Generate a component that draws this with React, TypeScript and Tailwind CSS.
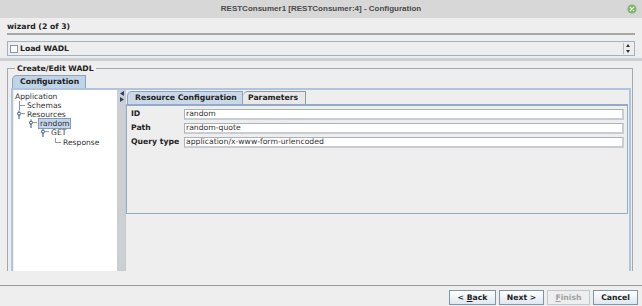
import React from "react";

const dejavu = "font-['DejaVu_Sans',sans-serif]";

const CloseIcon = () => (
  <svg width="10" height="10" viewBox="0 0 10 10" aria-hidden="true">
    <circle cx="5" cy="5" r="4.6" fill="#7dba67" />
    <path d="M3.3 3.3l3.4 3.4M6.7 3.3l-3.4 3.4" stroke="#ffffff" strokeWidth="1.2" strokeLinecap="round" />
  </svg>
);

// Metal look tree handle: small ring with a stem
const Handle = () => (
  <svg width="12" height="9" viewBox="0 0 12 9" aria-hidden="true">
    <line x1="5" y1="0" x2="5" y2="2.3" stroke="#8b98a6" strokeWidth="1" />
    <circle cx="5" cy="3.6" r="1.5" fill="#ffffff" stroke="#2f4f82" strokeWidth="1" />
    <line x1="5" y1="5.1" x2="5" y2="9" stroke="#2f4f82" strokeWidth="1" />
    <line x1="6.5" y1="3.6" x2="11" y2="3.6" stroke="#8b98a6" strokeWidth="1" />
  </svg>
);

const Branch = ({ last }: { last?: boolean }) => (
  <svg width="12" height="9" viewBox="0 0 12 9" aria-hidden="true">
    <line x1="5.5" y1="0" x2="5.5" y2={last ? 4.5 : 9} stroke="#8b98a6" strokeWidth="1" />
    <line x1="5.5" y1="4.5" x2="11" y2="4.5" stroke="#8b98a6" strokeWidth="1" />
  </svg>
);

const Spacer = () => <span className="inline-block w-[12px] h-[9px]" />;

const tree = [
  { label: "Application", pre: [] as React.ReactNode[] },
  { label: "Schemas", pre: [<Branch key="b" />] },
  { label: "Resources", pre: [<Handle key="h" />] },
  { label: "random", pre: [<Spacer key="s" />, <Handle key="h" />], selected: true },
  { label: "GET", pre: [<Spacer key="s1" />, <Spacer key="s2" />, <Handle key="h" />] },
  { label: "Response", pre: [<Spacer key="s1" />, <Spacer key="s2" />, <Spacer key="s3" />, <Branch key="b" last />] },
];

const fields = [
  { label: "ID", value: "random" },
  { label: "Path", value: "random-quote" },
  { label: "Query type", value: "application/x-www-form-urlencoded" },
];

const dots = "bg-[radial-gradient(circle,#a4acb4_0.6px,transparent_0.8px)] bg-[size:2px_2px]";

export default function App() {
  return (
    <div className={`w-[642px] h-[306px] bg-[#eeeeee] flex flex-col overflow-hidden text-[#333333] ${dejavu}`}>
      {/* Window title */}
      <div className="h-[18px] bg-[#d7d7d7] flex items-center shrink-0">
        <div className="w-[20px]" />
        <div className="flex-1 text-center font-['Liberation_Sans',sans-serif] font-bold text-[8px] text-[#4a4a4a]">
          RESTConsumer1 [RESTConsumer:4] - Configuration
        </div>
        <div className="w-[20px] flex justify-center">
          <CloseIcon />
        </div>
      </div>

      {/* Wizard header */}
      <div className="px-[7px]">
        <div className="h-[15px] flex items-end pb-[1px] font-bold text-[7.7px] leading-[10px] text-[#222222]">
          wizard (2 of 3)
        </div>
        <div className="h-[2px] bg-[#a7a7a7]" />

        <div className="mt-[6px] h-[15px] border border-[#9fb2c6] flex items-center">
          <span className="ml-[2px] w-[8px] h-[8px] bg-white border border-[#8797a8]" />
          <span className="ml-[2px] font-bold text-[7.7px] text-[#222222]">Load WADL</span>
          <span className="flex-1" />
          <span className="w-[9px] h-[11px] mr-[2px] border-l border-[#b5bcc4] flex flex-col items-center justify-between py-[1px]">
            <svg width="4" height="3" viewBox="0 0 4 3"><path d="M2 0L4 3H0z" fill="#333" /></svg>
            <svg width="4" height="3" viewBox="0 0 4 3"><path d="M2 3L4 0H0z" fill="#333" /></svg>
          </span>
        </div>
      </div>

      <div className={`mt-[2px] h-[3px] ${dots}`} />

      {/* Main titled area, clipped at the bottom */}
      <div className="h-[210px] overflow-hidden pl-[7px] pr-[9px]">
        <fieldset className="border border-[#a0a9b2] px-[3px] pr-[1px] h-[240px] mt-[3px]">
          <legend className="ml-[4px] px-[2px] font-bold text-[7.7px] leading-[9px] text-[#222222]">
            Create/Edit WADL
          </legend>

          {/* Outer tab strip */}
          <div className="flex mt-[2px] pl-[1px]">
            <div className="h-[13px] w-[74px] rounded-tl-[5px] border border-b-0 border-[#8ea3ba] bg-[#c0d4e8] flex items-center pl-[7px] font-bold text-[7.7px] text-[#222222]">
              Configuration
            </div>
          </div>

          <div className="border-2 border-[#b0c5dc] h-[230px] flex">
            {/* Tree */}
            <div className="w-[105px] bg-white border-l border-l-[#eeeeee] border-r border-[#c9cdd2] pt-[2px] text-[7.6px]">
              {tree.map((n) => (
                <div key={n.label} className="h-[9.1px] flex items-center">
                  {n.pre}
                  <span
                    className={
                      n.selected
                        ? "bg-[#c3d5ea] border border-[#7f9bbd] px-[1px] leading-[9px]"
                        : "leading-[9px] pl-[1px]"
                    }
                  >
                    {n.label}
                  </span>
                </div>
              ))}
            </div>

            {/* Split divider */}
            <div className={`w-[8px] ${dots} border-r border-[#c4cad0] flex flex-col items-center pt-[1px] gap-[1px]`}>
              <svg width="4" height="5" viewBox="0 0 4 5"><path d="M0 2.5L4 0V5z" fill="#23406e" /></svg>
              <svg width="4" height="5" viewBox="0 0 4 5"><path d="M4 2.5L0 0V5z" fill="#23406e" /></svg>
            </div>

            {/* Right pane */}
            <div className="flex-1 pt-[1px] pr-[1px]">
              <div className="flex pl-[1px] text-[7.7px] font-bold text-[#222222]">
                <div className="h-[13px] w-[116px] rounded-tl-[5px] border border-b-0 border-[#8ea3ba] bg-[#c9d9ea] flex items-center pl-[7px]">
                  Resource Configuration
                </div>
                <div className="h-[13px] w-[63px] rounded-tl-[5px] border border-b-0 border-l-0 border-[#8d9aa8] bg-[#e8e8e8] flex items-center pl-[5px]">
                  Parameters
                </div>
              </div>
              <div className="h-[110px] border border-[#93abc6] border-t-2 pl-[4px] pr-[3px] pt-[3px] flex flex-col gap-[4px]">
                {fields.map((f) => (
                  <div key={f.label} className="flex items-center h-[10px]">
                    <span className="w-[53px] font-bold text-[7.7px] text-[#222222]">{f.label}</span>
                    <span className="flex-1 h-[11px] bg-white border border-[#adb2b8] border-r-2 border-b-2 border-r-[#c9cdd1] border-b-[#c9cdd1] flex items-center pl-[1px] text-[7.7px] text-[#333333]">
                      {f.value}
                    </span>
                  </div>
                ))}
              </div>
            </div>
          </div>
        </fieldset>
      </div>

      {/* Bottom buttons */}
      <div className="mt-[14px] h-px bg-[#9a9a9a]" />
      <div className="mt-[4px] flex justify-end gap-[3px] pr-[4px] text-[7.7px] font-bold">
        <button className="h-[15px] w-[47px] border border-[#8294a8] bg-gradient-to-b from-white to-[#dfe7f0] text-[#222222]">
          &lt; <span className="underline">B</span>ack
        </button>
        <button className="h-[15px] w-[45px] border border-[#8294a8] bg-gradient-to-b from-white to-[#dfe7f0] text-[#222222]">
          Next &gt;
        </button>
        <button className="h-[15px] w-[43px] border border-[#c0c7ce] bg-[#eeeeee] text-[#a0a0a0]">
          <span className="underline">F</span>inish
        </button>
        <button className="h-[15px] w-[45px] border border-[#8294a8] bg-gradient-to-b from-white to-[#dfe7f0] text-[#222222]">
          Cancel
        </button>
      </div>
    </div>
  );
}
